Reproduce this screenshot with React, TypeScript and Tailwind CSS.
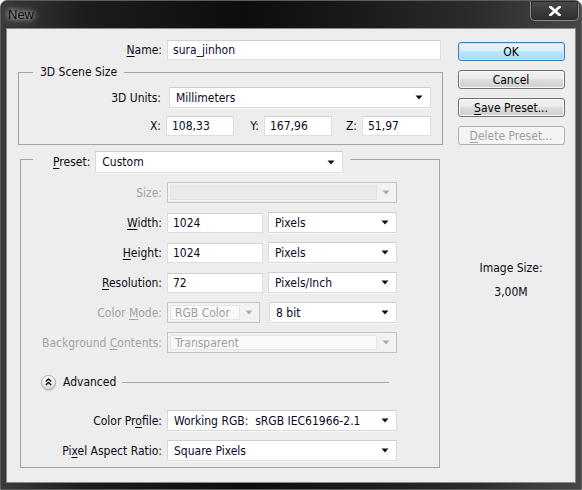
import React from "react";

type CP = { className?: string; children?: React.ReactNode };

function Arrow({ gray }: { gray?: boolean }) {
  return (
    <svg width="8" height="5" viewBox="0 0 8 5" className="shrink-0">
      <polygon points="0.5,0.5 7.5,0.5 4,4.5" fill={gray ? "#a9a9a9" : "#111"} />
    </svg>
  );
}

function Select({ value, className = "" }: { value: string; className?: string }) {
  return (
    <div
      className={`flex items-center h-[21px] bg-white border border-[#dadada] border-t-[#cdcdcd] shadow-[0_1px_0_#f7f7f7] pl-[6px] pr-[7px] shrink-0 ${className}`}
    >
      <span className="flex-1 whitespace-pre overflow-hidden text-[#0a0a1e]">{value}</span>
      <Arrow />
    </div>
  );
}

function DisabledSelect({ value, className = "", dark }: { value: string; className?: string; dark?: boolean }) {
  return (
    <div className={`flex h-[21px] border border-[#c4c4c4] bg-[#f2f2f2] p-[2px] shrink-0 ${className}`}>
      <div
        className={`flex-1 flex items-center border ${dark ? "border-[#e2e2e2] bg-[#eaeaea]" : "border-[#e6e6e6] bg-[#f9f9f9]"} pl-[4px] text-[#9f9f9f] whitespace-nowrap overflow-hidden`}
      >
        {value}
      </div>
      <div className="w-[17px] flex items-center justify-center">
        <Arrow gray />
      </div>
    </div>
  );
}

function Input({ value, className = "" }: { value: string; className?: string }) {
  return (
    <div
      className={`flex items-center h-[20px] bg-white border border-[#dedede] border-t-[#d0d0d0] pl-[5px] shrink-0 text-[#0a0a1e] ${className}`}
    >
      {value}
    </div>
  );
}

function U({ children }: CP) {
  return <span className="underline underline-offset-[2px]">{children}</span>;
}

function Button({ children, primary, disabled }: CP & { primary?: boolean; disabled?: boolean }) {
  const cls = primary
    ? "border-[#3c7fb1] bg-[linear-gradient(180deg,#eaf6fd_0%,#d9f0fc_45%,#bee6fd_50%,#a7d9f5_100%)] shadow-[inset_0_0_0_1px_#bfe9ff] text-black"
    : disabled
    ? "border-[#adb2b5] bg-[#f4f4f4] text-[#a0a0a0]"
    : "border-[#707070] bg-[linear-gradient(180deg,#f2f2f2_0%,#ebebeb_45%,#dddddd_50%,#cfcfcf_100%)] shadow-[inset_0_0_0_1px_#fbfbfb] text-black";
  return (
    <div className={`w-[107px] h-[19px] flex items-center justify-center border rounded-[3px] ${cls}`}>
      {children}
    </div>
  );
}

function Label({ children, className = "", disabled }: CP & { disabled?: boolean }) {
  return (
    <div className={`text-right shrink-0 whitespace-nowrap ${disabled ? "text-[#a2a2a2]" : "text-[#0a0a14]"} ${className}`}>
      {children}
    </div>
  );
}

export default function App() {
  return (
    <div className="w-[582px] h-[490px] flex flex-col rounded-t-[7px] border border-[#5c5c5c] bg-[linear-gradient(90deg,#3a3a3a_0%,#1d1d1d_14%,#0d0d0d_42%,#1b1b1b_62%,#2c2c2c_82%,#474747_100%)] font-['DejaVu_Sans_Condensed','Liberation_Sans',sans-serif] text-[12px] leading-[14px] overflow-hidden">
      {/* Title bar */}
      <div className="h-[27px] flex items-start justify-between shrink-0">
        <div className="pl-[7px] pt-[6px] text-[13px] leading-[16px] text-[#0a0a0a] font-['Liberation_Sans',sans-serif] [text-shadow:0_0_5px_rgba(255,255,255,0.9),0_0_10px_rgba(255,255,255,0.6)]">
          New
        </div>
        <div className="mr-[2px] w-[49px] h-[20px] border border-t-0 border-[#8d8d8d] rounded-b-[5px] shadow-[inset_0_0_0_1px_#2a2a2a] bg-[linear-gradient(180deg,#4a4a4a,#2e2e2e)] flex items-center justify-center">
          <svg width="12" height="10" viewBox="0 0 12 10">
            <path d="M1.5 1 L10.5 9 M10.5 1 L1.5 9" stroke="#fff" strokeWidth="2.6" strokeLinecap="square" />
          </svg>
        </div>
      </div>

      {/* Client area */}
      <div className="flex-1 px-[5px] pb-[6px] flex">
        <div className="flex-1 flex border border-[#8a8a8a] bg-[#ededed]">
          {/* Left column */}
          <div className="w-[440px] shrink-0 pt-[11px] flex flex-col">
            {/* Name */}
            <div className="flex items-center h-[20px]">
              <Label className="w-[155px]">
                <U>N</U>ame:
              </Label>
              <Input value="sura_jinhon" className="ml-[5px] w-[274px]" />
            </div>

            {/* 3D Scene Size */}
            <fieldset className="mt-[5px] ml-[11px] w-[425px] border border-[#a3a3a3] pb-[8px]">
              <legend className="ml-[14px] px-[7px] leading-[14px] text-[#0a0a14]">3D Scene Size</legend>
              <div className="mt-[8px] flex items-center h-[21px]">
                <Label className="w-[142px]">3D Units:</Label>
                <Select value="Millimeters" className="ml-[8px] w-[262px]" />
              </div>
              <div className="mt-[8px] flex items-center h-[20px]">
                <Label className="w-[142px]">X:</Label>
                <Input value="108,33" className="ml-[5px] w-[68px]" />
                <Label className="w-[30px] pr-[5px]">Y:</Label>
                <Input value="167,96" className="w-[68px]" />
                <Label className="w-[30px] pr-[5px]">Z:</Label>
                <Input value="51,97" className="w-[69px]" />
              </div>
            </fieldset>

            {/* Preset */}
            <fieldset className="mt-[6px] ml-[13px] w-[420px] border border-[#a3a3a3] pb-[6px]">
              <legend className="ml-[12px] pl-[20px] pr-[7px] h-[16px]">
                <div className="flex items-start h-[16px]">
                  <Label className="leading-[22px]">
                    <U>P</U>reset:
                  </Label>
                  <Select value="Custom" className="ml-[5px] w-[248px] h-[22px]" />
                </div>
              </legend>

              <div className="mt-[15px] flex items-center h-[21px]">
                <Label className="w-[141px]" disabled>
                  Size:
                </Label>
                <DisabledSelect value="" dark className="ml-[5px] w-[230px]" />
              </div>
              <div className="mt-[9px] flex items-center h-[21px]">
                <Label className="w-[141px]">
                  <U>W</U>idth:
                </Label>
                <Input value="1024" className="ml-[5px] w-[96px]" />
                <Select value="Pixels" className="ml-[5px] w-[129px]" />
              </div>
              <div className="mt-[9px] flex items-center h-[21px]">
                <Label className="w-[141px]">
                  <U>H</U>eight:
                </Label>
                <Input value="1024" className="ml-[5px] w-[96px]" />
                <Select value="Pixels" className="ml-[5px] w-[129px]" />
              </div>
              <div className="mt-[9px] flex items-center h-[21px]">
                <Label className="w-[141px]">
                  <U>R</U>esolution:
                </Label>
                <Input value="72" className="ml-[5px] w-[96px]" />
                <Select value="Pixels/Inch" className="ml-[5px] w-[129px]" />
              </div>
              <div className="mt-[9px] flex items-center h-[21px]">
                <Label className="w-[141px]" disabled>
                  Color <U>M</U>ode:
                </Label>
                <DisabledSelect value="RGB Color" className="ml-[5px] w-[93px]" />
                <Select value="8 bit" className="ml-[9px] w-[128px]" />
              </div>
              <div className="mt-[9px] flex items-center h-[21px]">
                <Label className="w-[141px]" disabled>
                  Background <U>C</U>ontents:
                </Label>
                <DisabledSelect value="Transparent" className="ml-[5px] w-[230px]" />
              </div>

              {/* Advanced */}
              <div className="mt-[21px] flex items-center h-[16px]">
                <div className="ml-[20px] w-[15px] h-[15px] rounded-full border border-[#a8a8a8] bg-[linear-gradient(180deg,#ffffff,#dcdcdc)] shadow-[0_1px_1px_rgba(0,0,0,0.15)] flex items-center justify-center shrink-0">
                  <svg width="7" height="8" viewBox="0 0 7 8">
                    <path d="M0.8 3.6 L3.5 1 L6.2 3.6 M0.8 7 L3.5 4.4 L6.2 7" stroke="#111" strokeWidth="1.4" fill="none" />
                  </svg>
                </div>
                <span className="ml-[7px] text-[#0a0a14] whitespace-nowrap">Advanced</span>
                <div className="ml-[6px] w-[267px] h-px bg-[#a8a8a8]" />
              </div>

              <div className="mt-[20px] flex items-center h-[21px]">
                <Label className="w-[141px]">
                  Color Pr<U>o</U>file:
                </Label>
                <Select value="Working RGB:  sRGB IEC61966-2.1" className="ml-[5px] w-[230px]" />
              </div>
              <div className="mt-[9px] flex items-center h-[21px]">
                <Label className="w-[141px]">
                  Pi<U>x</U>el Aspect Ratio:
                </Label>
                <Select value="Square Pixels" className="ml-[5px] w-[230px]" />
              </div>
            </fieldset>
          </div>

          {/* Right column */}
          <div className="flex-1 flex flex-col items-center pt-[13px] gap-[9px]">
            <Button primary>OK</Button>
            <Button>Cancel</Button>
            <Button>
              <U>S</U>ave Preset...
            </Button>
            <Button disabled>
              <U>D</U>elete Preset...
            </Button>
            <div className="mt-[107px] text-[#0a0a14]">Image Size:</div>
            <div className="mt-[1px] text-[#0a0a14]">3,00M</div>
          </div>
        </div>
      </div>
    </div>
  );
}
